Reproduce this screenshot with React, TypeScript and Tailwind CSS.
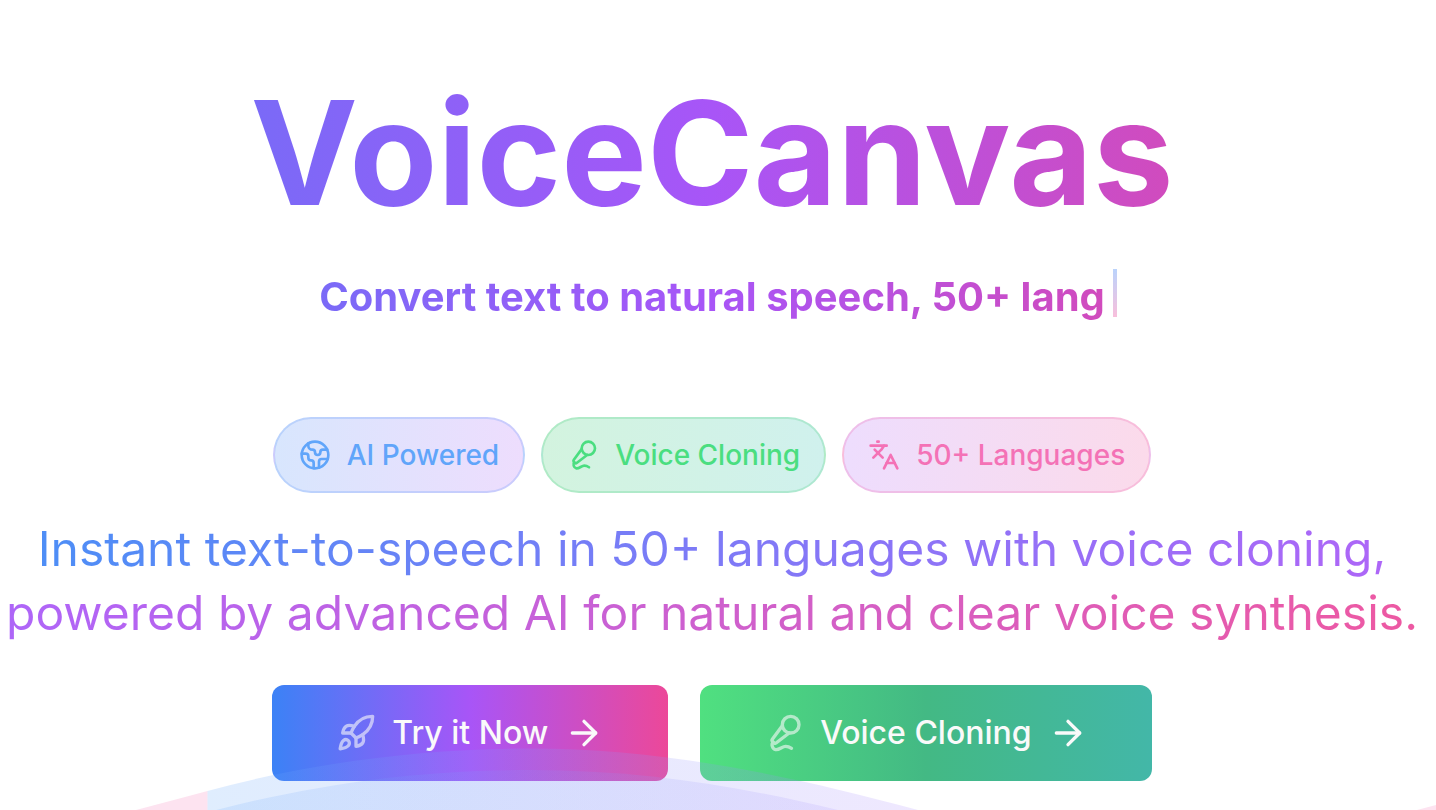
import type { ReactNode } from "react";
import { ArrowRight, Earth, Languages, MicVocal, Rocket } from "lucide-react";

const features = [
  {
    label: "AI Powered",
    icon: Earth,
    style: "border-[#3b82f633] from-[#3b82f633] to-[#a855f733] text-[#60a5fa]",
  },
  {
    label: "Voice Cloning",
    icon: MicVocal,
    style: "border-[#22c55e33] from-[#22c55e33] to-[#14b8a633] text-[#4ade80]",
  },
  {
    label: "50+ Languages",
    icon: Languages,
    style: "border-[#ec489933] from-[#a855f733] to-[#ec489933] text-[#f472b6]",
  },
];

function ActionButton({
  icon,
  className,
  children,
}: {
  icon: ReactNode;
  className: string;
  children: ReactNode;
}) {
  return (
    <button
      type="button"
      className={`flex h-24 items-center gap-4 rounded-xl bg-linear-to-r/srgb px-16 text-[32px] font-medium text-[#fafafa] ${className}`}
    >
      {icon}
      <span>{children}</span>
      <ArrowRight className="size-10" />
    </button>
  );
}

function Waves() {
  return (
    <svg
      className="pointer-events-none absolute inset-x-0 bottom-0 w-full"
      viewBox="0 0 1436 70"
      fill="none"
      aria-hidden="true"
    >
      <defs>
        <linearGradient id="wave" gradientUnits="userSpaceOnUse" x1="207" y1="0" x2="1100" y2="0">
          <stop offset="0" stopColor="#60a5fa" />
          <stop offset="1" stopColor="#c084fc" />
        </linearGradient>
      </defs>
      <path d="M136 70 C160 64 184 57 207.500 51 V70 Z" fill="#f472b6" fillOpacity="0.2" />
      <path d="M1417 70 L1436 65 V70 Z" fill="#f472b6" fillOpacity="0.2" />
      <path
        d="M207.500 51 C310 23 420 8.500 530 8.500 C660 8.500 785 34 918 70 H207.500 Z"
        fill="url(#wave)"
        fillOpacity="0.2"
      />
      <path d="M216 70 C325 42 425 30 530 30 C640 30 740 46 838 70 Z" fill="url(#wave)" fillOpacity="0.16" />
    </svg>
  );
}

export default function App() {
  return (
    <div className="relative min-h-screen overflow-hidden bg-white font-['Inter',sans-serif]">
      <main className="mr-3 flex flex-col items-center pt-[63px] pb-7 text-center">
        <h1 className="bg-linear-to-r/srgb from-[#7a6af7] via-[#a855f7] to-[#d14bbd] bg-clip-text text-[144px] leading-tight font-bold text-transparent">
          VoiceCanvas
        </h1>

        <div className="relative mt-[26px]">
          <h2 className="bg-linear-to-r/srgb from-[#7a6af7] via-[#a855f7] to-[#d14bbd] bg-clip-text text-[40px] leading-14 font-bold text-transparent">
            Convert text to natural speech, 50+ lang
          </h2>
          <span className="absolute top-0 left-full ml-2 h-12 w-1 bg-linear-to-b/srgb from-[#3b82f6] to-[#ec4899] opacity-35" />
        </div>

        <ul className="mt-[92px] flex gap-4">
          {features.map(({ label, icon: Icon, style }) => (
            <li
              key={label}
              className={`flex items-center gap-4 rounded-full border-2 bg-linear-to-r/srgb px-6 py-4 text-[28px] leading-10 font-medium ${style}`}
            >
              <Icon className="size-8" />
              <span>{label}</span>
            </li>
          ))}
        </ul>

        <p className="mt-6 text-[48px] leading-16">
          <span className="bg-linear-to-r/srgb from-[#3b82f6] via-[#a855f7] to-[#ec4899] bg-clip-text text-transparent opacity-90">
            Instant text-to-speech in 50+ languages with voice cloning,
            <br />
            powered by advanced AI for natural and clear voice synthesis.
          </span>
        </p>

        <div className="mt-10 flex gap-8">
          <ActionButton
            icon={<Rocket className="size-10 opacity-60" />}
            className="from-[#3b82f6] via-[#a855f7] to-[#ec4899]"
          >
            Try it Now
          </ActionButton>
          <ActionButton
            icon={<MicVocal className="size-10 opacity-60" />}
            className="from-[#50e080] via-[#43b984] to-[#43b7a8]"
          >
            Voice Cloning
          </ActionButton>
        </div>
      </main>
      <Waves />
    </div>
  );
}
